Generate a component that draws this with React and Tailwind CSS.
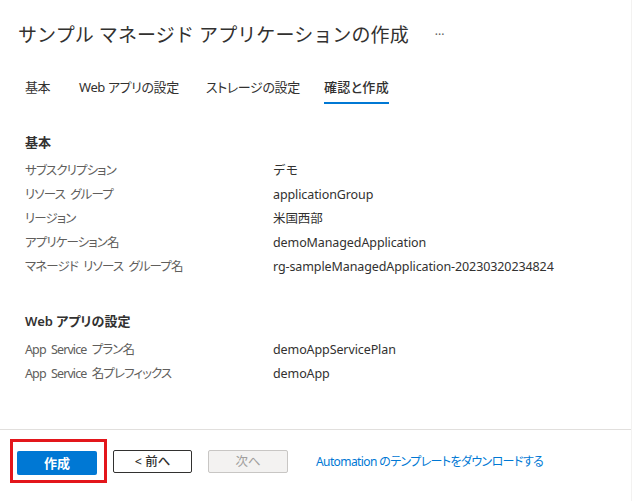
import React from "react";

const font = {
  fontFamily: '"Noto Sans", "Noto Sans CJK JP", sans-serif',
};

const basics = [
  ["サブスクリプション", "デモ"],
  ["リソース グループ", "applicationGroup"],
  ["リージョン", "米国西部"],
  ["アプリケーション名", "demoManagedApplication"],
  ["マネージド リソース グループ名", "rg-sampleManagedApplication-20230320234824"],
];

const webApp = [
  ["App Service プラン名", "demoAppServicePlan"],
  ["App Service 名プレフィックス", "demoApp"],
];

// 各タブの幅は次のタブの開始位置に合わせて固定
const tabs = [
  { label: "基本", w: "w-[54px]" },
  { label: "Web アプリの設定", w: "w-[127px]" },
  { label: "ストレージの設定", w: "w-[118px]" },
  { label: "確認と作成", w: "" },
];

const Section = ({ title, rows }) => (
  <div>
    <h3 className="text-[13px] leading-[20px] font-semibold text-[#323130] mb-[7px] [font-feature-settings:'palt']">
      {title}
    </h3>
    {rows.map(([label, value]) => (
      <div key={label} className="flex text-[12.5px] leading-[24px]">
        <div className="w-[248px] text-[#605e5c] tracking-[-0.9px] [word-spacing:3px] [font-feature-settings:'palt']">
          {label}
        </div>
        <div className="text-[#323130] tracking-[-0.1px]">{value}</div>
      </div>
    ))}
  </div>
);

export default function App() {
  return (
    <div
      style={font}
      className="w-[632px] h-[501px] bg-white flex flex-col overflow-hidden border-r border-[#f3f2f1]"
    >
      <div className="flex items-center pl-[18px] pt-[20px]">
        <h1 className="text-[19px] leading-[30px] text-[#323130] tracking-[0.1px]">
          サンプル マネージド アプリケーションの作成
        </h1>
        <span className="ml-[26px] text-[12px] text-[#605e5c] leading-[30px]">···</span>
      </div>

      <div className="flex pl-[25px] mt-[24px]">
        {tabs.map((t, i) => (
          <div key={t.label} className={t.w}>
            <span
              className={
                "inline-block whitespace-nowrap text-[13px] leading-[20px] pb-[5px] border-b-2 text-[#323130] [font-feature-settings:'palt'] " +
                (i === 3 ? "border-[#0078d4] font-medium tracking-[0.3px]" : "border-transparent tracking-[-0.4px]")
              }
            >
              {t.label}
            </span>
          </div>
        ))}
      </div>

      <div className="pl-[25px] mt-[28px] flex flex-col gap-[32px]">
        <Section title="基本" rows={basics} />
        <Section title="Web アプリの設定" rows={webApp} />
      </div>

      <div className="mt-auto border-t border-[#e1dfdd] h-[72px] flex items-start pt-[9px] pl-[10px]">
        <div className="border-[3px] border-[#e3161b] pl-[4px] pr-[7px] pt-[8px] pb-[5px]">
          <button className="w-[80px] h-[24px] bg-[#0078d4] rounded-[2px] text-white text-[13px] font-semibold leading-[24px]">
            作成
          </button>
        </div>
        <button className="ml-[6px] mt-[11px] w-[79px] h-[23px] border border-[#323130] rounded-[2px] text-[12.5px] text-[#323130] leading-[21px] font-medium">
          &lt; 前へ
        </button>
        <button className="ml-[16px] mt-[11px] w-[80px] h-[23px] border border-[#c8c6c4] bg-[#f3f2f1] rounded-[2px] text-[12.5px] text-[#a19f9d] leading-[21px]">
          次へ
        </button>
        <a className="ml-[28px] mt-[11px] text-[12px] leading-[23px] text-[#0078d4] tracking-[-0.6px] [font-feature-settings:'palt']">
          Automation のテンプレートをダウンロードする
        </a>
      </div>
    </div>
  );
}
